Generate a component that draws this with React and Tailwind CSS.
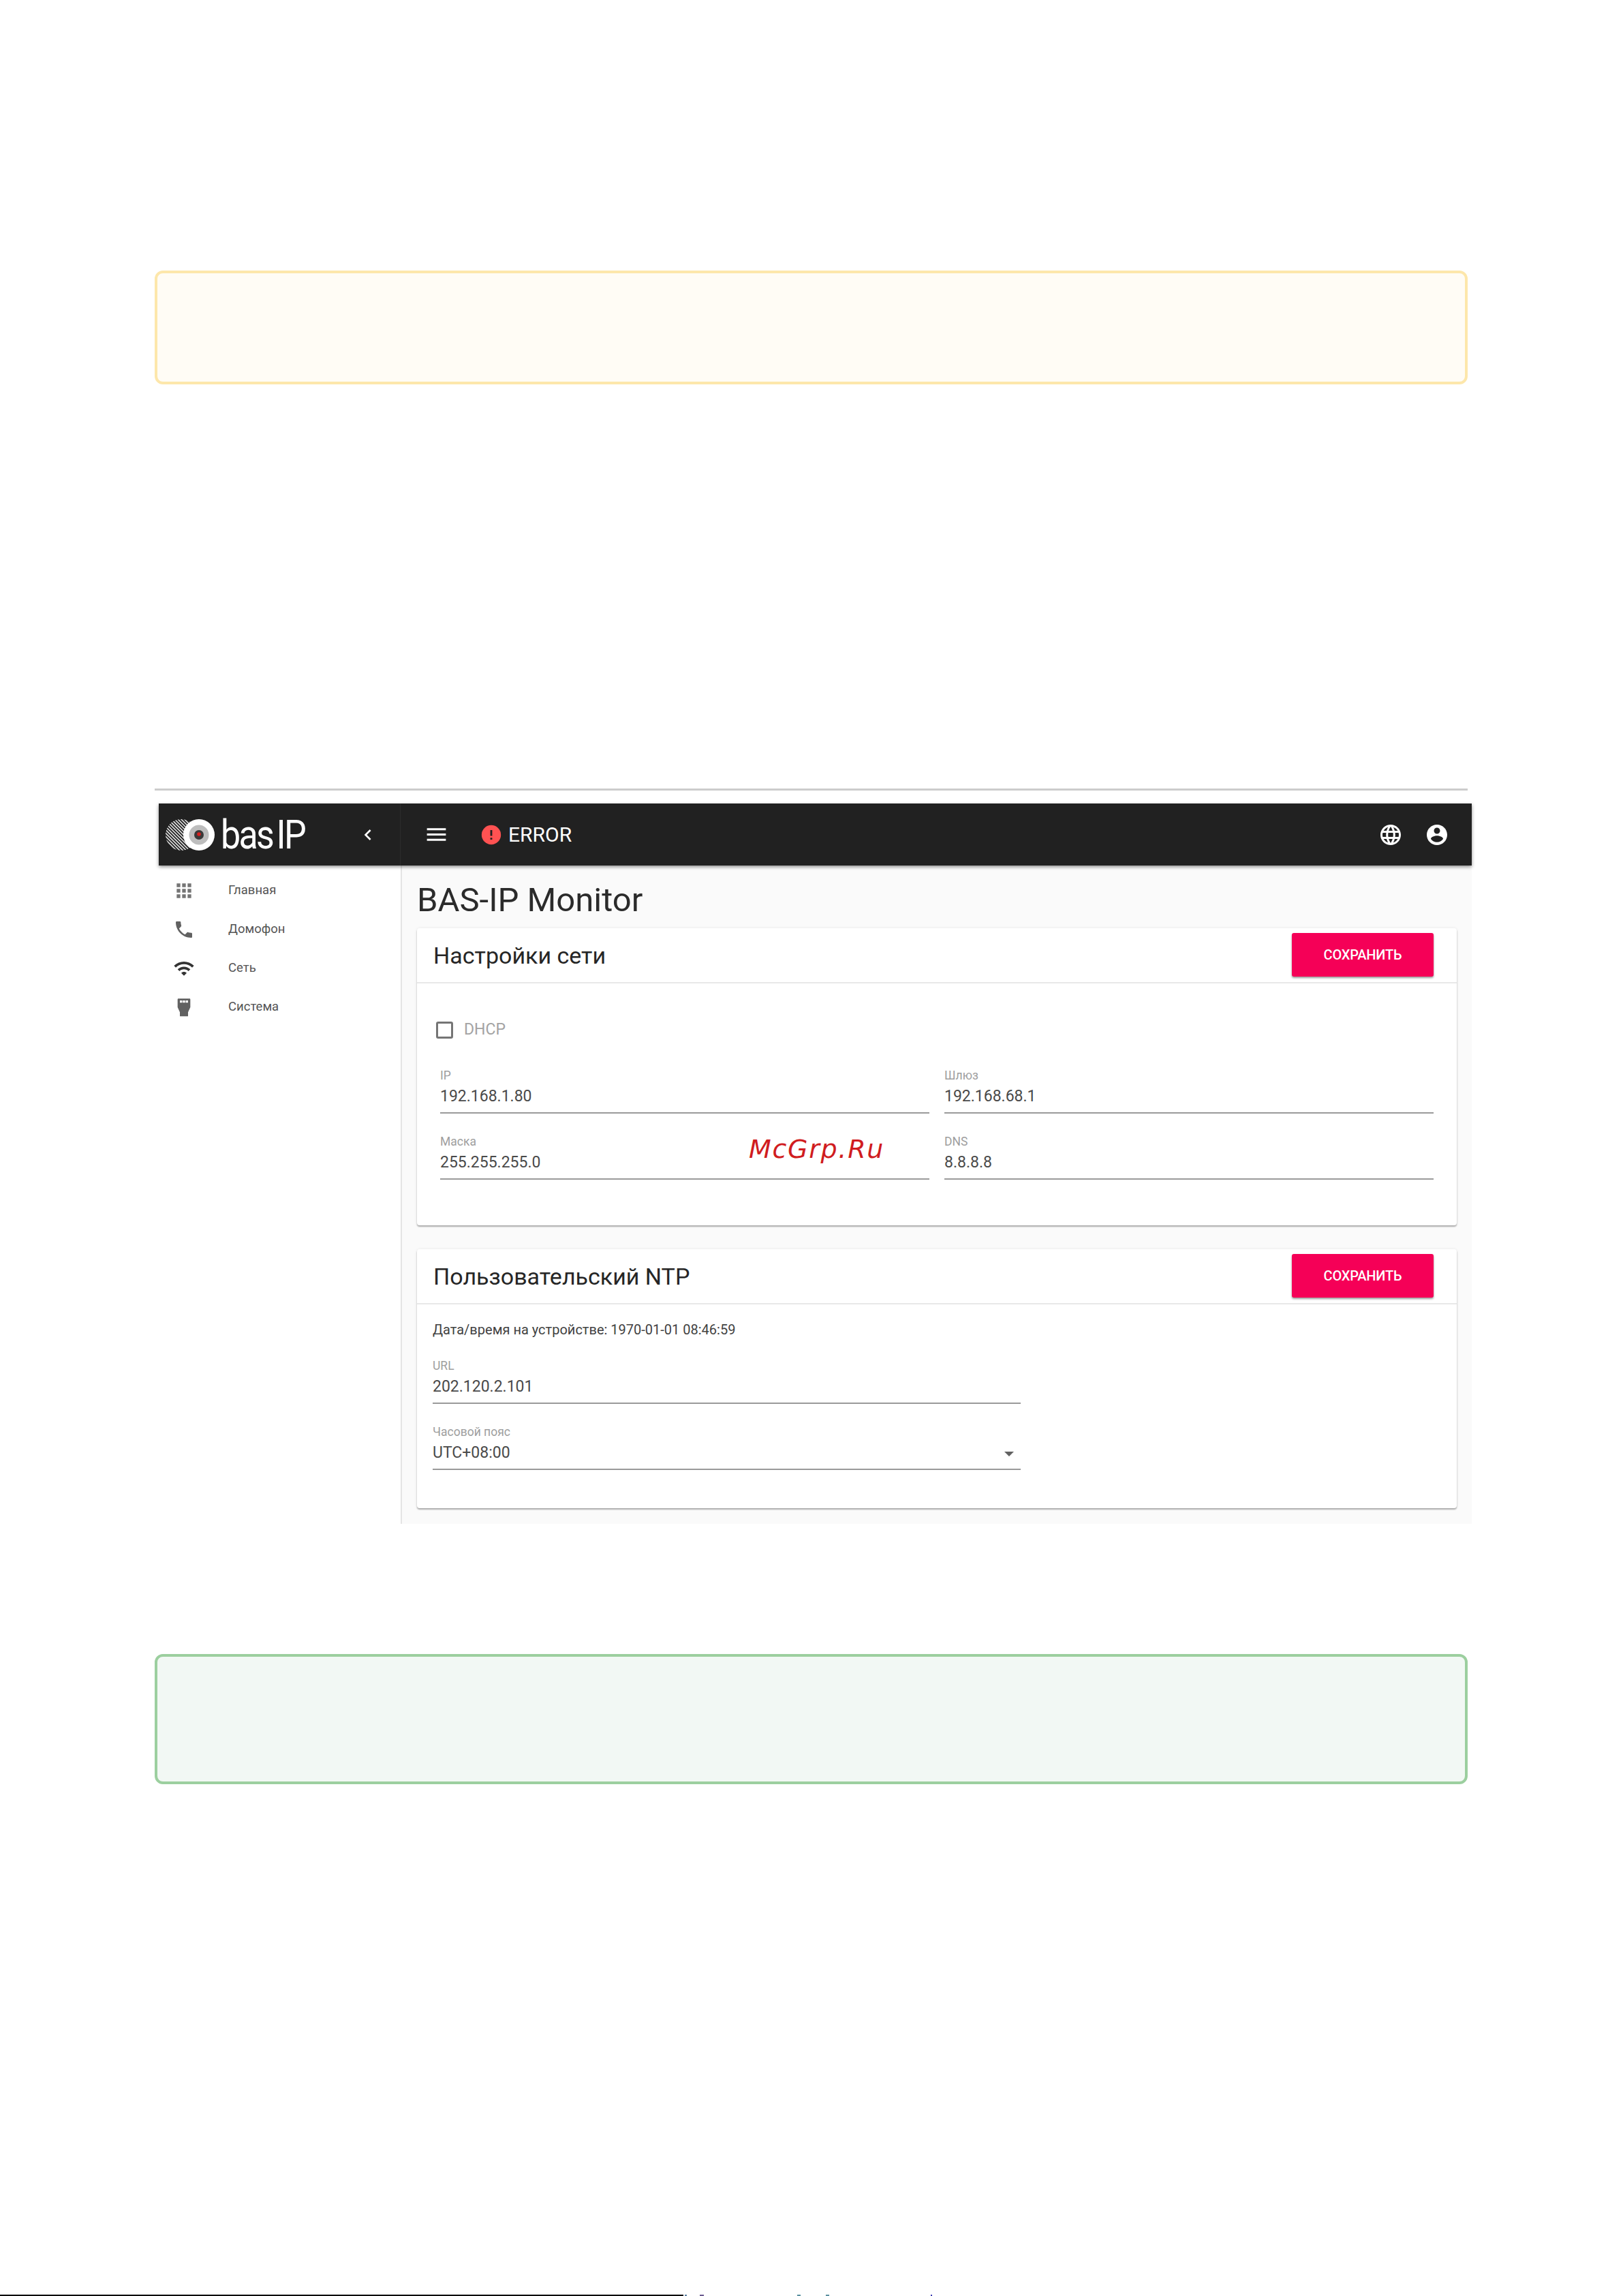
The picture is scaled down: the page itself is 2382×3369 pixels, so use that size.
import { useState } from "react";

const paths = {
  menu: "M3 18h18v-2H3v2zm0-5h18v-2H3v2zm0-7v2h18V6H3z",
  chevron: "M15.41 7.41L14 6l-6 6 6 6 1.41-1.41L10.83 12z",
  apps: "M4 8h4V4H4v4zm6 12h4v-4h-4v4zm-6 0h4v-4H4v4zm0-6h4v-4H4v4zm6 0h4v-4h-4v4zm6-10v4h4V4h-4zm-6 4h4V4h-4v4zm6 6h4v-4h-4v4zm0 6h4v-4h-4v4z",
  phone:
    "M6.62 10.79c1.44 2.83 3.76 5.14 6.59 6.59l2.2-2.2c.27-.27.67-.36 1.02-.24 1.12.37 2.33.57 3.57.57.55 0 1 .45 1 1V20c0 .55-.45 1-1 1-9.39 0-17-7.61-17-17 0-.55.45-1 1-1h3.5c.55 0 1 .45 1 1 0 1.25.2 2.45.57 3.57.11.35.03.74-.25 1.02l-2.2 2.2z",
  wifi: "M1 9l2 2c4.97-4.97 13.03-4.97 18 0l2-2C16.93 2.93 7.08 2.93 1 9zm8 8l3 3 3-3c-1.65-1.66-4.34-1.66-6 0zm-4-4l2 2c2.76-2.76 7.24-2.76 10 0l2-2C15.14 9.14 8.87 9.14 5 13z",
  system:
    "M6 2.5h12c.6 0 1 .4 1 1V12l-2.5 5.5v4c0 .3-.2.5-.5.5H8c-.3 0-.5-.2-.5-.5v-4L5 12V3.5c0-.6.4-1 1-1zM7.5 4.5V7h2.6V4.5zM10.7 4.5V7h2.6V4.5zM13.9 4.5V7h2.6V4.5z",
  language:
    "M11.99 2C6.47 2 2 6.48 2 12s4.47 10 9.99 10C17.52 22 22 17.52 22 12S17.52 2 11.99 2zm6.93 6h-2.95c-.32-1.25-.78-2.45-1.38-3.56 1.84.63 3.37 1.91 4.33 3.56zM12 4.04c.83 1.2 1.48 2.53 1.91 3.96h-3.82c.43-1.43 1.08-2.76 1.91-3.96zM4.26 14C4.1 13.36 4 12.69 4 12s.1-1.36.26-2h3.38c-.08.66-.14 1.32-.14 2 0 .68.06 1.34.14 2H4.26zm.82 2h2.95c.32 1.25.78 2.45 1.38 3.56-1.84-.63-3.37-1.9-4.33-3.56zm2.95-8H5.08c.96-1.66 2.49-2.93 4.33-3.56C8.81 5.55 8.35 6.75 8.03 8zM12 19.96c-.83-1.2-1.48-2.53-1.91-3.96h3.82c-.43 1.43-1.08 2.76-1.91 3.96zM14.34 14H9.66c-.09-.66-.16-1.32-.16-2 0-.68.07-1.35.16-2h4.68c.09.65.16 1.32.16 2 0 .68-.07 1.34-.16 2zm.25 5.56c.6-1.11 1.06-2.31 1.38-3.56h2.95c-.96 1.65-2.49 2.93-4.33 3.56zM16.36 14c.08-.66.14-1.32.14-2 0-.68-.06-1.34-.14-2h3.38c.16.64.26 1.31.26 2s-.1 1.36-.26 2h-3.38z",
  account:
    "M12 2C6.48 2 2 6.48 2 12s4.48 10 10 10 10-4.48 10-10S17.52 2 12 2zm0 3c1.66 0 3 1.34 3 3s-1.34 3-3 3-3-1.34-3-3 1.34-3 3-3zm0 14.2c-2.5 0-4.71-1.28-6-3.22.03-1.99 4-3.08 6-3.08 1.99 0 5.97 1.09 6 3.08-1.29 1.94-3.5 3.22-6 3.22z",
};

const Icon = ({ name, className }) => (
  <svg viewBox="0 0 24 24" fill="currentColor" className={className}>
    <path d={paths[name]} />
  </svg>
);

const navItems = [
  { icon: "apps", label: "Главная", color: "text-[#757575]" },
  { icon: "phone", label: "Домофон", color: "text-[#616161]" },
  { icon: "wifi", label: "Сеть", color: "text-[#333333]" },
  { icon: "system", label: "Система", color: "text-[#616161]" },
];

// bas IP logo: striped disc behind the white lens
const Logo = () => (
  <div className="flex w-[212px] items-center">
    <svg viewBox="0 0 72 46" className="h-[46px] w-[72px] shrink-0">
      <defs>
        <pattern id="hatch" width="3.4" height="3.4" patternUnits="userSpaceOnUse" patternTransform="rotate(45)">
          <rect width="3.4" height="1.7" fill="#d8d8d8" />
        </pattern>
      </defs>
      <circle cx="23" cy="23" r="23" fill="url(#hatch)" />
      <circle cx="49" cy="23" r="23" fill="#ffffff" />
      <circle cx="49" cy="23" r="14.5" fill="#bdbdbd" />
      <circle cx="49" cy="23" r="7" fill="#3a3a3a" />
      <circle cx="49" cy="22" r="2.8" fill="#d8201f" />
    </svg>
    <span className="ml-[9px] origin-left scale-x-[0.88] text-[59px] leading-[46px] font-normal tracking-[-3px] whitespace-nowrap text-white">
      bas<span className="ml-[6px]">IP</span>
    </span>
  </div>
);

const Field = ({ label, value, arrow, className }) => (
  <div className={className}>
    <div className="h-[19px] text-[17.5px] leading-[21px] text-[#9e9e9e]">{label}</div>
    <div className="relative mt-[4px] h-[43px] border-b-2 border-[#9a9a9a] text-[23px] leading-[36px] text-[#4a4a4a]">
      {value}
      {arrow && (
        <span className="absolute top-[16px] right-[10px] h-0 w-0 border-x-[7px] border-t-[7px] border-x-transparent border-t-[#616161]" />
      )}
    </div>
  </div>
);

const Card = ({ title, height, children }) => {
  const [saved, setSaved] = useState(false);
  return (
    <div className={`rounded-[4px] bg-white shadow-[0_2px_2px_rgba(0,0,0,0.3),0_0_4px_rgba(0,0,0,0.08)] ${height}`}>
      <div className="flex h-[81px] items-center justify-between border-b-2 border-[#e8e8e8] pr-[34px] pl-[24px]">
        <h2 className="text-[34px] leading-[40px] text-[#262626]">{title}</h2>
        <button
          onClick={() => setSaved(!saved)}
          className="mb-[2px] h-[64px] w-[208px] rounded-[3px] bg-[#f50057] text-[20px] font-medium tracking-[-0.2px] text-white shadow-[0_2px_3px_rgba(0,0,0,0.4)]"
        >
          СОХРАНИТЬ
        </button>
      </div>
      {children}
    </div>
  );
};

export default function App() {
  const [dhcp, setDhcp] = useState(false);

  return (
    <div className="flex h-[3369px] flex-col overflow-hidden bg-white font-[Roboto]">
      {/* Yellow note */}
      <div className="mt-[397px] ml-[227px] h-[167px] w-[1927px] rounded-[12px] border-4 border-[#fde7ab] bg-[#fffcf5]" />

      <div className="mt-[593px] ml-[227px] h-[3px] w-[1927px] bg-[#cccccc]" />

      {/* Device screenshot */}
      <div className="relative mt-[19px] ml-[233px] flex h-[1057px] w-[1927px] flex-col">
        <div className="relative z-10 flex h-[91px] items-center bg-[#212121] shadow-[0_2px_5px_rgba(0,0,0,0.45)]">
          <div className="flex h-full w-[355px] items-center border-r border-[#2c2c2c] pl-[10px]">
            <Logo />
            <Icon name="chevron" className="ml-[69px] h-[32px] w-[32px] text-white" />
          </div>
          <Icon name="menu" className="ml-[34px] h-[37px] w-[37px] text-white" />
          <svg viewBox="0 0 24 24" className="ml-[45px] h-[34px] w-[34px]">
            <circle cx="12" cy="12" r="10" fill="#ff5252" />
            <path d="M11 7h2v6h-2zM11 15h2v2h-2z" fill="#212121" />
          </svg>
          <span className="ml-[8px] text-[30px] text-white">ERROR</span>
          <div className="ml-auto flex items-center gap-[32px] pr-[33px]">
            <Icon name="language" className="h-[36px] w-[36px] text-white" />
            <Icon name="account" className="h-[36px] w-[36px] text-white" />
          </div>
        </div>

        <div className="flex flex-1">
          <nav className="w-[355px] shrink-0 bg-white pt-[8px]">
            {navItems.map((item) => (
              <div key={item.label} className="flex h-[57px] items-center pl-[21px]">
                <Icon name={item.icon} className={`h-[32px] w-[32px] ${item.color}`} />
                <span className="ml-[49px] text-[18.5px] text-[#555555]">{item.label}</span>
              </div>
            ))}
          </nav>

          <main className="flex-1 border-l-2 border-[#e4e4e4] bg-[#fafafa] pr-[22px] pl-[22px]">
            <h1 className="mt-[22px] h-[70px] text-[49px] leading-[58px] text-[#2b2b2b]">BAS-IP Monitor</h1>

            <Card title="Настройки сети" height="h-[436px]">
              <div className="px-[34px]">
                <label className="mt-[55px] ml-[-6px] flex h-[26px] items-center">
                  <input
                    type="checkbox"
                    checked={dhcp}
                    onChange={() => setDhcp(!dhcp)}
                    className="h-[25px] w-[25px] appearance-none rounded-[3px] border-[3.5px] border-[#757575]"
                  />
                  <span className="ml-[16px] text-[23px] text-[#a3a3a3]">DHCP</span>
                </label>
                <div className="mt-[44px] grid grid-cols-2 gap-x-[22px] gap-y-[31px]">
                  <Field label="IP" value="192.168.1.80" />
                  <Field label="Шлюз" value="192.168.68.1" />
                  <Field label="Маска" value="255.255.255.0" />
                  <Field label="DNS" value="8.8.8.8" />
                </div>
              </div>
            </Card>

            <div className="mt-[35px]">
              <Card title="Пользовательский NTP" height="h-[380px]">
                <div className="pl-[23px]">
                  <p className="mt-[24px] text-[20px] leading-[26px] text-[#424242]">
                    Дата/время на устройстве: 1970-01-01 08:46:59
                  </p>
                  <Field label="URL" value="202.120.2.101" className="mt-[30px] w-[863px]" />
                  <Field label="Часовой пояс" value="UTC+08:00" arrow className="mt-[31px] w-[863px]" />
                </div>
              </Card>
            </div>
          </main>
        </div>

        {/* Watermark over the screenshot */}
        <span className="absolute top-[484px] left-[866px] font-['DejaVu_Sans'] text-[38px] leading-[46px] tracking-[1.7px] text-[#d01c20] italic">
          McGrp.Ru
        </span>
      </div>

      {/* Green note */}
      <div className="mt-[191px] ml-[227px] h-[191px] w-[1927px] rounded-[12px] border-4 border-[#9ccf9f] bg-[#f2f8f4]" />

      {/* Cut-off page edge: rule and tops of the next line of text */}
      <div className="mt-auto flex h-[2px]">
        <div className="w-[1003px] bg-black" />
        <div className="ml-[2px] w-[3px] bg-[#5a7fa0]" />
        <div className="ml-[19px] w-[6px] bg-[#6a5a90]" />
        <div className="ml-[137px] w-[5px] bg-[#5a90a0]" />
        <div className="ml-[37px] w-[5px] bg-[#5a90a0]" />
        <div className="ml-[149px] w-[2px] bg-[#3a3ab0]" />
      </div>
    </div>
  );
}
